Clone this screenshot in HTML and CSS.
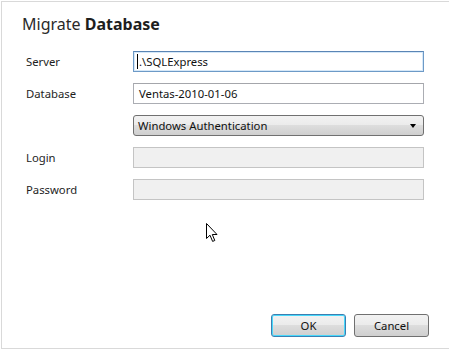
FILE: index.html
```html
<!DOCTYPE html>
<html>
<head>
<meta charset="utf-8">
<link rel="stylesheet" href="styles.css">
</head>
<body>
<div class="window">
  <h1 class="title">Migrate <b>Database</b></h1>
  <div class="form">
    <label class="label">Server</label>
    <div class="field focused"><span class="caret"></span>.\SQLExpress</div>
    <label class="label">Database</label>
    <div class="field">Ventas-2010-01-06</div>
    <span class="label"></span>
    <div class="select">Windows Authentication<span class="arrow"></span></div>
    <label class="label">Login</label>
    <div class="field disabled"></div>
    <label class="label">Password</label>
    <div class="field disabled"></div>
  </div>
  <div class="footer">
    <button class="btn default">OK</button>
    <button class="btn">Cancel</button>
  </div>
  <svg class="cursor" width="13" height="20" viewBox="0 0 13 20">
    <path d="M0.5 0.5 L0.5 15.5 L4 12.2 L6.6 18.4 L8.8 17.5 L6.3 11.5 L11 11.5 Z" fill="#fff" stroke="#000" stroke-width="1" stroke-linejoin="miter"/>
  </svg>
</div>
</body>
</html>
```
FILE: styles.css
```css
html, body {
  margin: 0;
  padding: 0;
  background: #fff;
}
body {
  font-family: "Noto Sans", "Open Sans", sans-serif;
  font-size: 11.3px;
  color: #1e1e1e;
}
.window {
  position: relative;
  box-sizing: border-box;
  margin: 1px 0 0 1px;
  height: 348px;
  border-top: 1px solid #d9d9d9;
  border-left: 1px solid #d9d9d9;
  border-bottom: 1px solid #d9d9d9;
  display: flex;
  flex-direction: column;
  padding: 0 20px 11px 20px;
}
.title {
  margin: 11px 0 0 0;
  font-size: 16px;
  line-height: 22px;
  font-weight: normal;
  color: #2a2a2a;
}
.title b {
  font-weight: bold;
  color: #1e1e1e;
}
.form {
  margin-top: 16px;
  display: grid;
  grid-template-columns: 107px 291px;
  grid-auto-rows: 21px;
  row-gap: 11px;
  padding-left: 4px;
}
.label {
  display: flex;
  align-items: center;
  color: #1e1e1e;
}
.field {
  box-sizing: border-box;
  border: 1px solid #abadb3;
  border-top-color: #a4a6ab;
  background: #fff;
  display: flex;
  align-items: center;
  padding-left: 5px;
  color: #111;
}
.field.focused {
  border-color: #6d9ac7;
  border-top-color: #5a85b5;
  box-shadow: inset 0 0 0 1px #d6e8f8;
  padding-left: 3px;
}
.caret {
  display: inline-block;
  width: 1px;
  height: 15px;
  background: #000;
  margin-right: 1px;
}
.field.disabled {
  background: #f0f0f0;
  border-color: #c4c4c4;
}
.select {
  box-sizing: border-box;
  border: 1px solid #707070;
  border-radius: 3px;
  background: linear-gradient(#f2f2f2 0%, #ebebeb 49%, #dddddd 50%, #cfcfcf 100%);
  display: flex;
  align-items: center;
  padding-left: 4px;
  position: relative;
  color: #111;
}
.arrow {
  position: absolute;
  right: 7px;
  top: 8px;
  width: 0;
  height: 0;
  border-left: 3.5px solid transparent;
  border-right: 3.5px solid transparent;
  border-top: 4px solid #000;
}
.footer {
  margin-top: auto;
  display: flex;
  justify-content: flex-end;
  gap: 8px;
}
.btn {
  box-sizing: border-box;
  width: 75px;
  height: 23px;
  border: 1px solid #707070;
  border-radius: 3px;
  background: linear-gradient(#f2f2f2 0%, #ebebeb 49%, #dddddd 50%, #cfcfcf 100%);
  font-family: "Noto Sans", "Open Sans", sans-serif;
  font-size: 11.3px;
  color: #111;
  padding: 0;
}
.btn.default {
  border-color: #3c7fb1;
  box-shadow: inset 0 0 0 1px #48d8fb;
}
.cursor {
  position: absolute;
  left: 204px;
  top: 221px;
}
```
